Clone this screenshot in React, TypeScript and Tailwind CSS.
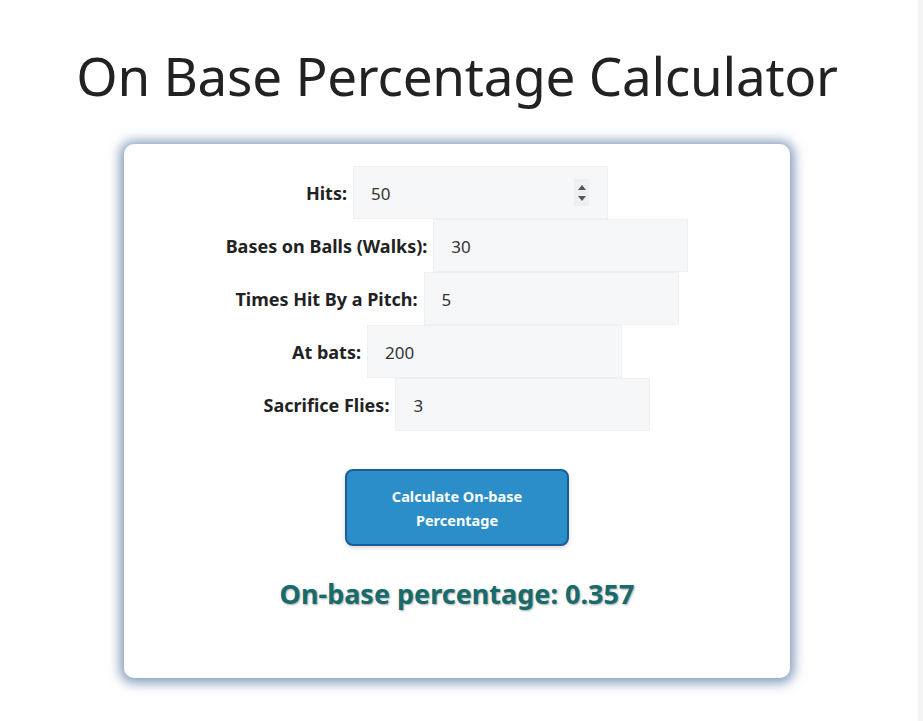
import React, { useState } from "react";

const rows = [
  { label: "Hits:", value: "50", spinner: true },
  { label: "Bases on Balls (Walks):", value: "30" },
  { label: "Times Hit By a Pitch:", value: "5" },
  { label: "At bats:", value: "200" },
  { label: "Sacrifice Flies:", value: "3" },
];

function Row({ label, value, spinner }: { label: string; value: string; spinner?: boolean }) {
  const [v, setV] = useState(value);
  return (
    <div className="flex items-center justify-center">
      <label className="text-[18px] font-bold text-[#222] mr-[6px] leading-none">{label}</label>
      <div className="relative">
        <input
          value={v}
          onChange={(e) => setV(e.target.value)}
          className="w-[255px] h-[53px] bg-[#f6f7f9] border border-[#eef0f2] pl-[17px] pt-[1px] text-[17px] text-[#333] outline-none"
          style={{ fontFamily: "'Noto Sans', 'Open Sans', sans-serif" }}
        />
        {spinner && (
          <div className="absolute right-[19px] top-[13px] w-[15px] h-[27px] bg-[#eeeff1] flex flex-col items-center justify-center gap-[6px]">
            <svg width="8" height="5" viewBox="0 0 8 5"><path d="M4 0 L8 5 L0 5 Z" fill="#555" /></svg>
            <svg width="8" height="5" viewBox="0 0 8 5"><path d="M0 0 L8 0 L4 5 Z" fill="#555" /></svg>
          </div>
        )}
      </div>
    </div>
  );
}

export default function App() {
  return (
    <div
      className="min-h-[721px] bg-white flex flex-col items-center relative pr-[9px]"
      style={{ fontFamily: "'Noto Sans', 'Open Sans', sans-serif" }}
    >
      <div className="absolute right-0 top-0 bottom-0 w-[5px] bg-[#f3f4f6]" />
      <h1 className="mt-[40px] text-[53px] leading-[72px] font-normal text-[#222] tracking-[-0.25px]">
        On Base Percentage Calculator
      </h1>
      <div className="mt-[32px] w-[666px] h-[534px] bg-white rounded-[10px] shadow-[0_1px_12px_4px_rgba(100,130,170,0.8)] pt-[22px] flex flex-col items-center">
        <div className="flex flex-col w-full">
          {rows.map((r) => (
            <Row key={r.label} label={r.label} value={r.value} spinner={r.spinner} />
          ))}
        </div>
        <button className="mt-[38px] w-[224px] h-[77px] bg-[#2b8ec8] border-2 border-[#1a5d9c] rounded-[8px] text-white font-bold text-[14.5px] leading-[24px] px-[28px] shadow-[0_2px_4px_rgba(0,0,0,0.15)]">
          Calculate On-base Percentage
        </button>
        <div
          className="mt-[28px] text-[27px] font-bold text-[#176b6b]"
          style={{ textShadow: "1px 1px 2px rgba(0,0,0,0.35)" }}
        >
          On-base percentage: 0.357
        </div>
      </div>
    </div>
  );
}
